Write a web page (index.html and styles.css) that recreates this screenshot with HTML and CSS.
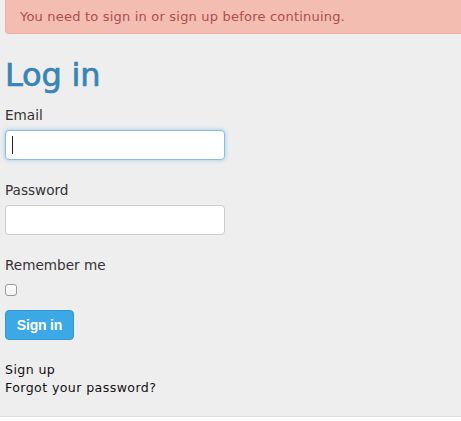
FILE: index.html
```html
<!DOCTYPE html>
<html>
<head>
<meta charset="utf-8">
<link rel="stylesheet" href="styles.css">
</head>
<body>
<div class="page">
  <div class="alert">You need to sign in or sign up before continuing.</div>
  <h1 class="title">Log in</h1>
  <form class="form">
    <div class="field">
      <label class="label">Email</label>
      <div class="input focused"><span class="caret"></span></div>
    </div>
    <div class="field">
      <label class="label">Password</label>
      <div class="input"></div>
    </div>
    <div class="field">
      <label class="label">Remember me</label>
      <span class="checkbox"></span>
    </div>
    <button type="button" class="btn">Sign in</button>
  </form>
  <div class="links">
    <a class="link">Sign up</a>
    <a class="link">Forgot your password?</a>
  </div>
</div>
</body>
</html>
```

FILE: styles.css
```css
html, body {
  margin: 0;
  padding: 0;
  background: #ffffff;
}
.page {
  background: #eeeeee;
  height: 416px;
  border-bottom: 1px solid #dcdcdc;
  padding-left: 5px;
  font-family: "DejaVu Sans", Verdana, sans-serif;
  overflow: hidden;
}
.alert {
  height: 34px;
  line-height: 34px;
  background: #f3bdb2;
  color: #ad4e4b;
  font-size: 13px;
  letter-spacing: 0.2px;
  padding-left: 14px;
  border-bottom-left-radius: 4px;
  border-left: 1px solid #ebb0a6;
  border-bottom: 1px solid #ebb0a6;
  box-sizing: border-box;
}
.title {
  margin: 21px 0 0 0;
  font-size: 32px;
  line-height: 40px;
  font-weight: normal;
  color: #3784b6;
  letter-spacing: -0.2px;
  -webkit-text-stroke: 0.7px #3784b6;
}
.form {
  display: flex;
  flex-direction: column;
  align-items: flex-start;
}
.field {
  display: flex;
  flex-direction: column;
  align-items: flex-start;
}
.label {
  font-size: 13.6px;
  line-height: 20px;
  color: #333333;
  margin-top: 10px;
}
.field + .field .label {
  margin-top: 20px;
}
.input {
  margin-top: 5px;
  width: 220px;
  height: 30px;
  box-sizing: border-box;
  background: #ffffff;
  border: 1px solid #cccccc;
  border-radius: 4px;
  display: flex;
  align-items: center;
}
.input.focused {
  border-color: #88bde4;
  box-shadow: 0 0 4px rgba(82, 168, 236, 0.55);
}
.caret {
  width: 1px;
  height: 18px;
  background: #222;
  margin-left: 6px;
}
.checkbox {
  margin-top: 9px;
  width: 12px;
  height: 12px;
  box-sizing: border-box;
  border: 1px solid #9a9a9a;
  border-radius: 3px;
  background: linear-gradient(#ffffff, #f0f0f0);
}
.btn {
  margin-top: 14px;
  width: 69px;
  height: 30px;
  border: 1px solid #2f97d6;
  border-radius: 4px;
  background: #3da8e6;
  color: #ffffff;
  font-family: "Liberation Sans", Arial, sans-serif;
  font-weight: bold;
  font-size: 14px;
  padding: 0;
  letter-spacing: -0.2px;
}
.links {
  margin-top: 21px;
  display: flex;
  flex-direction: column;
}
.link {
  font-size: 12.6px;
  line-height: 18px;
  color: #111111;
  letter-spacing: 0.4px;
}
```
